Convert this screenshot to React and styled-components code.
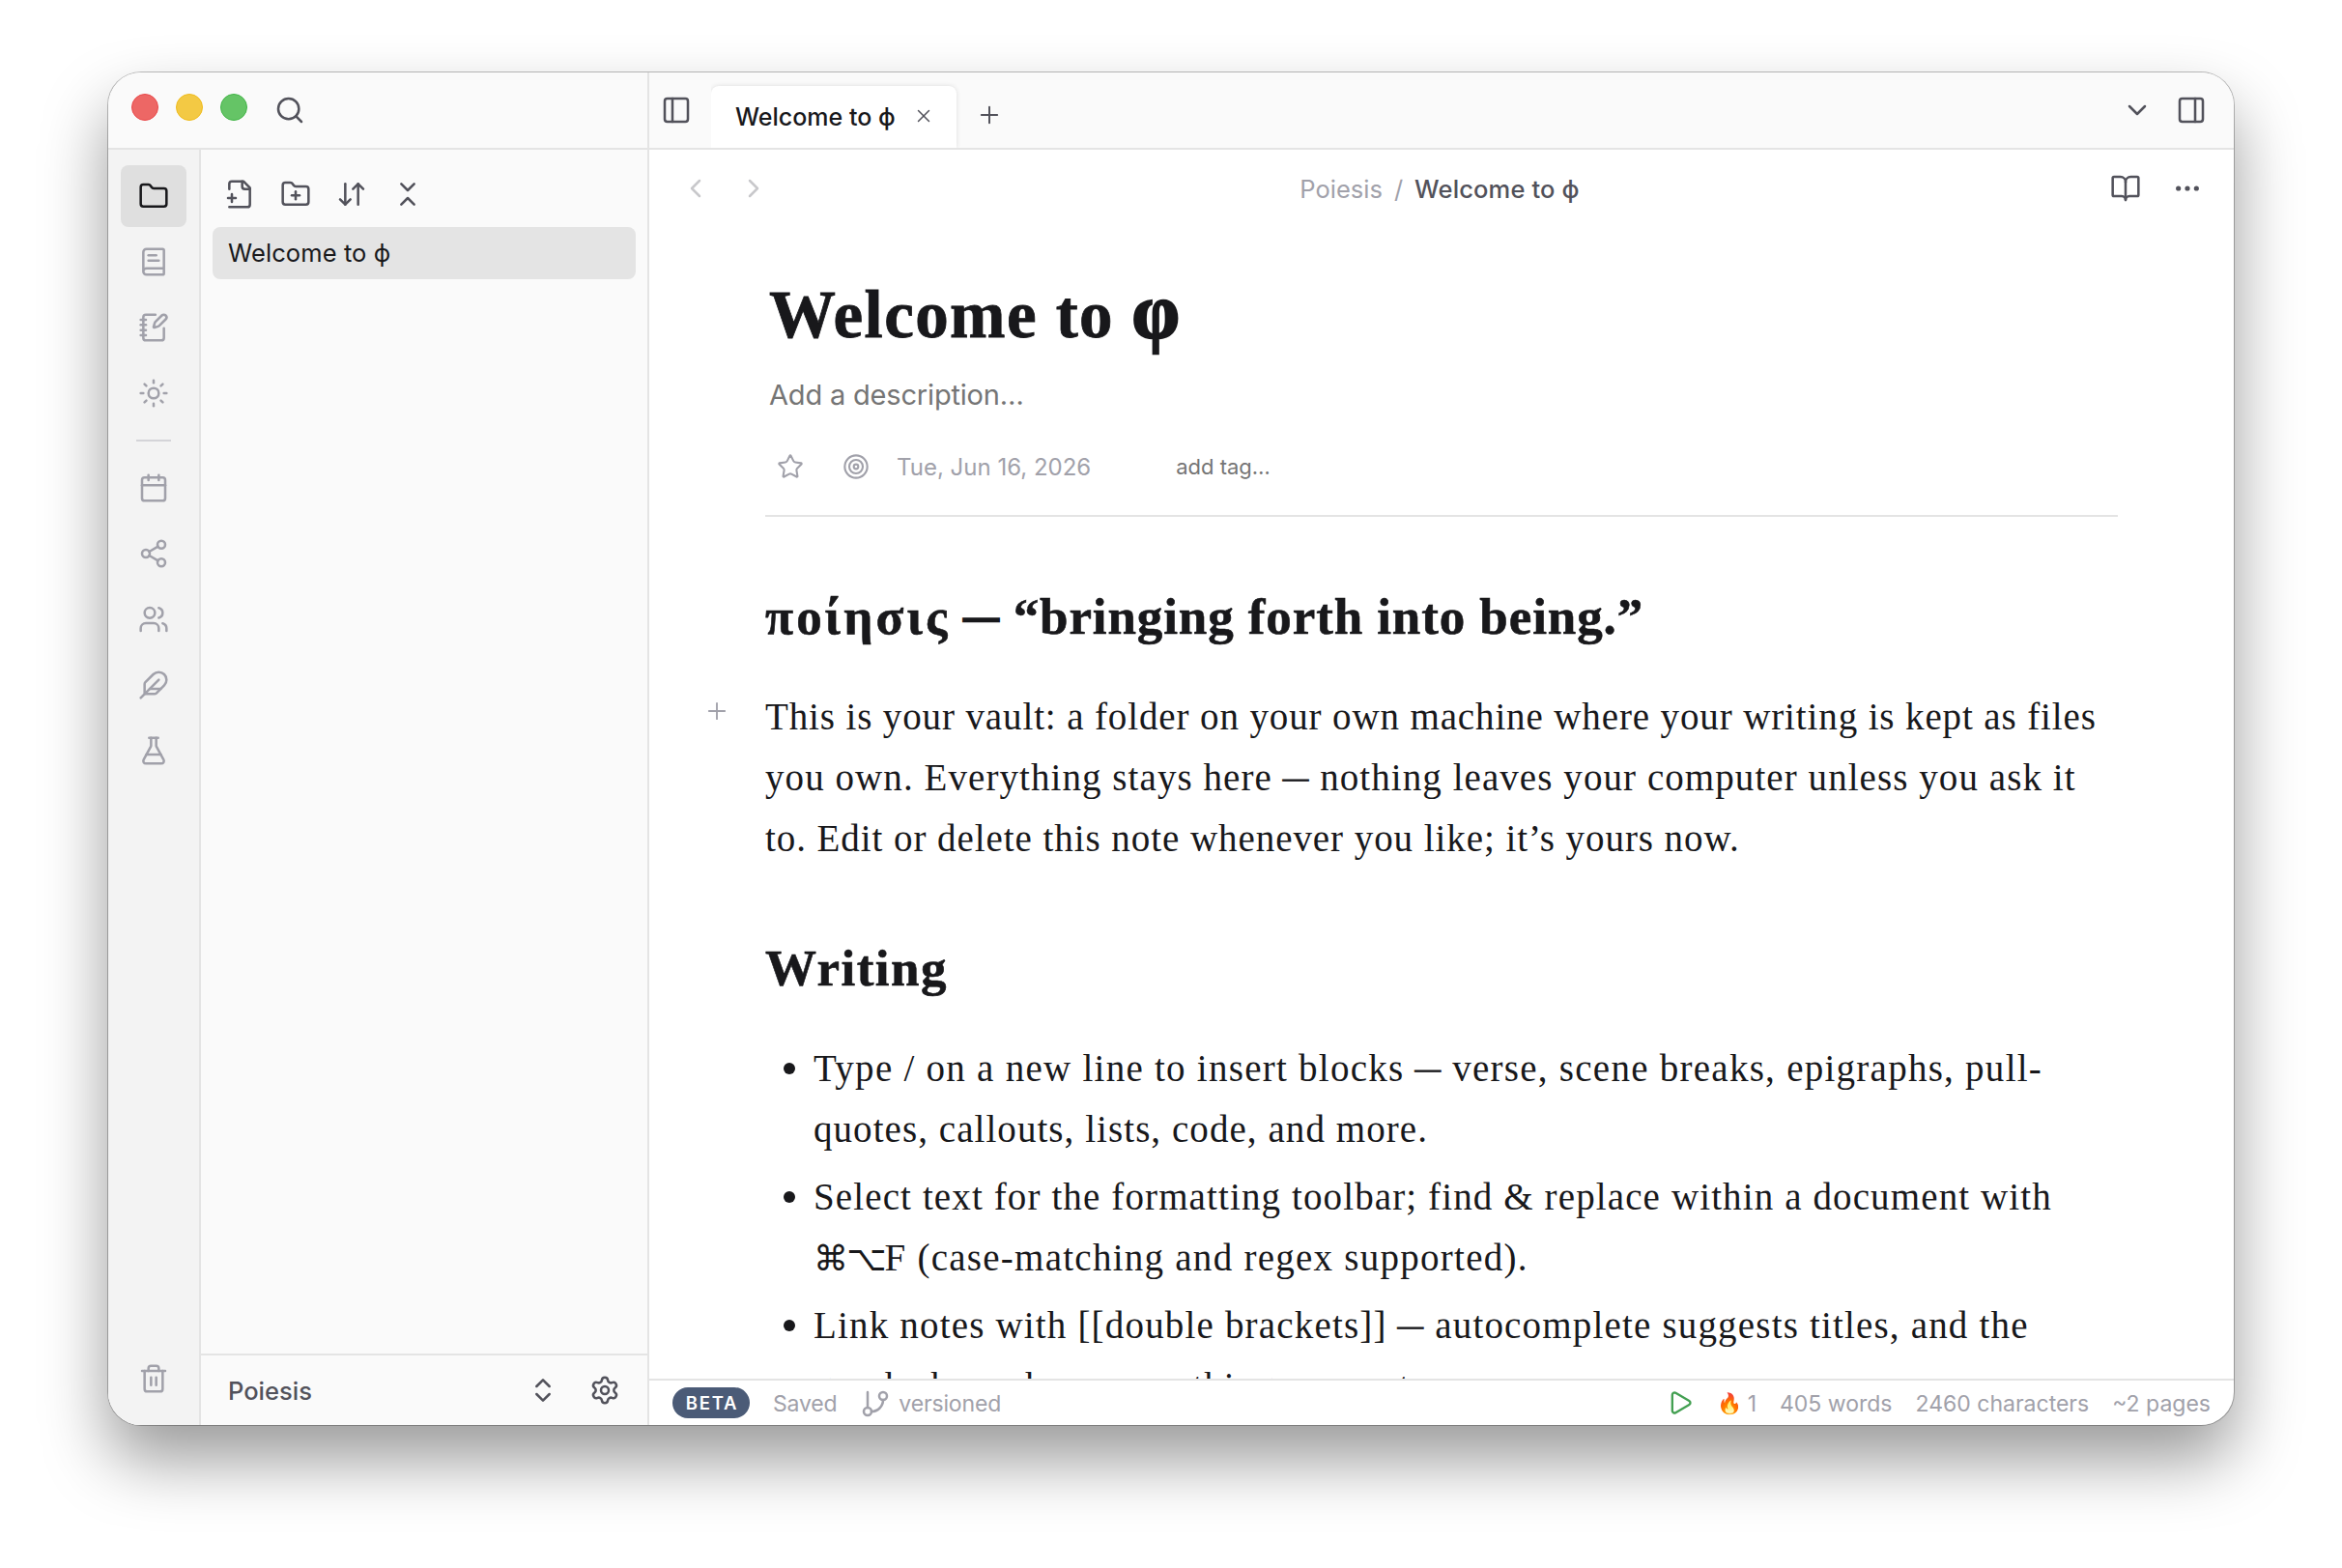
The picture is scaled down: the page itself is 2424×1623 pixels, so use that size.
import React from 'react';
import styled, { createGlobalStyle } from 'styled-components';
import {
    ArrowDownUp, BookOpen, Calendar, ChevronDown, ChevronLeft, ChevronRight, ChevronsDownUp,
    ChevronsUpDown, Ellipsis, Feather, FlaskConical, Folder, FolderPlus, GitBranch, NotebookPen,
    PanelLeft, PanelRight, Play, Plus, Search, Settings, Share2, Star, Sun, Target, Trash2, Users, X,
} from 'lucide-react';

const colors = {
    ink: '#18181b',
    icon: '#52525b',
    muted: '#a1a1aa',
    hint: '#757575',
    disabled: '#c8c8cb',
    line: '#e4e4e4',
    rail: '#f3f3f3',
    panel: '#fafafa',
    page: '#ffffff',
    badge: '#4b5b77',
    play: '#43a052',
};

const ui = `Inter, 'Liberation Sans', sans-serif`;
const serif = `'Liberation Serif', 'DejaVu Sans', serif`;

const GlobalStyle = createGlobalStyle`
    * {
        box-sizing: border-box;
    }
    body {
        margin: 0;
        background: #ffffff;
        overflow: hidden;
    }
`;

const Desktop = styled.div`
    height: 1623px;
    padding: 75px 112px 148px;
    font-family: ${ui};
    color: ${colors.ink};
`;

const Window = styled.div`
    height: 1400px;
    display: grid;
    grid-template-columns: 560px 1fr;
    border-radius: 34px;
    overflow: hidden;
    background: ${colors.page};
    box-shadow: 0 0 0 1px rgba(0, 0, 0, 0.25), 0 36px 68px rgba(0, 0, 0, 0.4);
`;

const Sidebar = styled.aside`
    display: flex;
    flex-direction: column;
    min-height: 0;
    background: ${colors.panel};
    border-right: 2px solid ${colors.line};
`;

const TitleBar = styled.div`
    flex: none;
    display: flex;
    align-items: center;
    height: 80px;
    padding-left: 24px;
    border-bottom: 2px solid ${colors.line};
`;

const Lights = styled.div`
    display: flex;
    gap: 18px;
    margin: 0 28px 6px 0;
`;

const Light = styled.span`
    width: 28px;
    height: 28px;
    border-radius: 50%;
    background: ${(p) => p.$fill};
    border: 1px solid ${(p) => p.$edge};
`;

const SidebarBody = styled.div`
    flex: 1;
    display: flex;
    min-height: 0;
`;

const Rail = styled.nav`
    display: flex;
    flex-direction: column;
    align-items: center;
    gap: 4px;
    width: 96px;
    padding: 16px 0;
    background: ${colors.rail};
    border-right: 2px solid ${colors.line};
`;

const RailButton = styled.button`
    display: flex;
    align-items: center;
    justify-content: center;
    width: 68px;
    height: 64px;
    padding: 0;
    border: none;
    border-radius: 8px;
    background: ${(p) => (p.$active ? '#dfdfdf' : 'transparent')};
    color: ${(p) => (p.$active ? colors.ink : colors.muted)};
`;

const RailDivider = styled.div`
    width: 36px;
    height: 2px;
    margin: 12px 0;
    background: #d4d4d8;
`;

const Spacer = styled.div`
    flex: 1;
`;

const Files = styled.div`
    flex: 1;
    display: flex;
    flex-direction: column;
`;

const FileTools = styled.div`
    display: flex;
    gap: 10px;
    height: 80px;
    padding: 12px 16px 0;
`;

const IconButton = styled.button`
    flex: none;
    display: flex;
    align-items: center;
    justify-content: center;
    width: ${(p) => p.$width || 48}px;
    height: ${(p) => p.$height || 68}px;
    padding: 0;
    border: none;
    background: none;
    color: ${(p) => p.$color || colors.icon};
`;

const FileItem = styled.div`
    display: flex;
    align-items: center;
    height: 54px;
    margin: 0 12px;
    padding: 0 0 2px 16px;
    border-radius: 8px;
    background: ${colors.line};
    font-size: 25.5px;
    letter-spacing: 0.1px;
`;

const VaultBar = styled.div`
    display: flex;
    align-items: center;
    height: 74px;
    padding: 0 20px 0 28px;
    border-top: 2px solid ${colors.line};
`;

const VaultName = styled.span`
    flex: 1;
    font-size: 25.5px;
    font-weight: 500;
    color: ${colors.icon};
`;

const VaultActions = styled.div`
    display: flex;
    gap: 16px;
`;

const Main = styled.main`
    display: flex;
    flex-direction: column;
    min-width: 0;
    min-height: 0;
`;

const TabBar = styled.div`
    flex: none;
    display: flex;
    align-items: center;
    height: 80px;
    padding-right: 16px;
    background: ${colors.panel};
    border-bottom: 2px solid ${colors.line};
`;

const Tab = styled.div`
    align-self: flex-end;
    display: flex;
    align-items: center;
    justify-content: space-between;
    width: 254px;
    height: 64px;
    margin-left: 8px;
    padding: 0 23px 2px 25px;
    border-radius: 8px 8px 0 0;
    background: ${colors.page};
    box-shadow: 0 0 5px rgba(0, 0, 0, 0.12);
    clip-path: inset(-8px -8px 0 0);
    font-size: 25px;
    font-weight: 500;
    white-space: nowrap;
`;

const TabLabel = styled.span`
    padding-top: 2px;
`;

const NewTab = styled(IconButton)`
    margin: 10px 0 0 6px;
`;

const NoteBar = styled.div`
    flex: none;
    display: grid;
    grid-template-columns: 1fr auto 1fr;
    align-items: center;
    height: 80px;
    padding: 0 24px;
`;

const NavButtons = styled.div`
    display: flex;
    gap: 12px;
`;

const NoteActions = styled.div`
    display: flex;
    justify-content: flex-end;
    gap: 16px;
`;

const Breadcrumb = styled.div`
    display: flex;
    gap: 12px;
    padding: 1px 4px 0 0;
    font-size: 25.5px;
    color: ${colors.muted};
`;

const Current = styled.span`
    font-weight: 500;
    letter-spacing: 0.14px;
    color: ${colors.icon};
`;

const Note = styled.article`
    flex: 1;
    min-height: 0;
    overflow: hidden;
    padding: 51px 120px 0;
    font-family: ${serif};
`;

const NoteHeader = styled.header`
    padding-bottom: 22px;
    border-bottom: 2px solid ${colors.line};
`;

const Title = styled.h1`
    margin: 0 0 0 4px;
    font-size: 69px;
    line-height: 80px;
    letter-spacing: 1.4px;
    -webkit-text-stroke: 0.8px ${colors.ink};
`;

const Phi = styled.span`
    font-size: 1.15em;
    line-height: 0;
    -webkit-text-stroke: 2.4px ${colors.ink};
`;

const Description = styled.div`
    margin: 21px 0 0 4px;
    font-family: ${ui};
    font-size: 29px;
    line-height: 44px;
    letter-spacing: -0.18px;
    color: ${colors.hint};
`;

const Meta = styled.div`
    display: flex;
    align-items: center;
    height: 56px;
    margin-top: 24px;
    padding-left: 2px;
    gap: 20px;
    font-family: ${ui};
    color: ${colors.muted};
`;

const NoteDate = styled.span`
    margin: 0 68px 0 -2px;
    font-size: 24px;
`;

const AddTag = styled.span`
    font-size: 22px;
    color: ${colors.hint};
`;

const Heading = styled.h2`
    margin: ${(p) => p.$top}px 0 39px;
    font-size: 53px;
    line-height: 66px;
    letter-spacing: ${(p) => p.$track}px;
    -webkit-text-stroke: 0.6px ${colors.ink};
    white-space: nowrap;
`;

const Greek = styled.span`
    letter-spacing: 3.1px;
`;

const Paragraph = styled.p`
    position: relative;
    margin: 0;
`;

const Line = styled.span`
    display: block;
    font-size: 39px;
    line-height: 63px;
    letter-spacing: ${(p) => p.$track}px;
    white-space: nowrap;
`;

const Dash = styled.span`
    font-size: 0.68em;
    line-height: 0;
    vertical-align: 0.16em;
    -webkit-text-stroke: ${(p) => p.$weight || 1}px ${colors.ink};
`;

const Keys = styled.span`
    font-size: 36px;
    line-height: 0;
    letter-spacing: -2px;
`;

const AddBlock = styled(Plus)`
    position: absolute;
    left: -64px;
    top: 12px;
    color: ${colors.muted};
`;

const List = styled.ul`
    display: flex;
    flex-direction: column;
    gap: 7px;
    margin: 39px 0 0;
    padding: 0;
    list-style: none;
`;

const Item = styled.li`
    display: flex;
    padding-left: 19px;

    &::before {
        content: '';
        flex: none;
        width: 12px;
        height: 12px;
        margin: 26px 19px 0 0;
        border-radius: 50%;
        background: ${colors.ink};
    }
`;

const StatusBar = styled.footer`
    flex: none;
    display: flex;
    align-items: center;
    gap: 24px;
    height: 48px;
    padding: 0 24px;
    border-top: 2px solid ${colors.line};
    font-size: 23px;
    color: ${colors.muted};
`;

const Badge = styled.span`
    display: flex;
    align-items: center;
    justify-content: center;
    width: 80px;
    height: 32px;
    padding-left: 2px;
    border-radius: 16px;
    background: ${colors.badge};
    color: #ffffff;
    font-size: 18.5px;
    font-weight: 600;
    letter-spacing: 1.8px;
`;

const Status = styled.span`
    display: flex;
    align-items: center;
    gap: ${(p) => p.$gap || 0}px;
    padding-top: 1px;
    letter-spacing: ${(p) => p.$track || 0}px;
    white-space: nowrap;
`;

const Flame = styled.span`
    width: 28px;
    font-size: 21px;
    line-height: 1;
`;

// file icon with the plus on its left edge, not in the lucide set any more
function FilePlusIcon() {
    return (
        <svg width="32" height="32" viewBox="0 0 24 24" fill="none" stroke="currentColor"
             strokeWidth="1.9" strokeLinecap="round" strokeLinejoin="round">
            <path d="M4 22h14a2 2 0 0 0 2-2V7l-5-5H6a2 2 0 0 0-2 2v4"/>
            <path d="M14 2v4a2 2 0 0 0 2 2h4"/>
            <path d="M3 15h6"/>
            <path d="M6 12v6"/>
        </svg>
    );
}

// book with a spine at the bottom and two lines of text
function BookTextIcon() {
    return (
        <svg width="32" height="32" viewBox="0 0 24 24" fill="none" stroke="currentColor"
             strokeWidth="1.9" strokeLinecap="round" strokeLinejoin="round">
            <path d="M4 19.5v-15A2.5 2.5 0 0 1 6.5 2H19a1 1 0 0 1 1 1v18a1 1 0 0 1-1 1H6.5a1 1 0 0 1 0-5H20"/>
            <path d="M8 11h8"/>
            <path d="M8 7h6"/>
        </svg>
    );
}

const icon = { size: 32, strokeWidth: 1.9 };

const views = [Folder, BookTextIcon, NotebookPen, Sun];
const tools = [Calendar, Share2, Users, Feather, FlaskConical];

function App() {
    return (
        <Desktop>
            <GlobalStyle/>
            <Window>
                <Sidebar>
                    <TitleBar>
                        <Lights>
                            <Light $fill="#ed6765" $edge="#e9494a"/>
                            <Light $fill="#f3c944" $edge="#efbb1c"/>
                            <Light $fill="#65c466" $edge="#43b548"/>
                        </Lights>
                        <Search {...icon} color={colors.icon}/>
                    </TitleBar>
                    <SidebarBody>
                        <Rail>
                            {views.map((Icon, i) => (
                                <RailButton key={i} $active={i === 0}><Icon {...icon}/></RailButton>
                            ))}
                            <RailDivider/>
                            {tools.map((Icon, i) => (
                                <RailButton key={i}><Icon {...icon}/></RailButton>
                            ))}
                            <Spacer/>
                            <RailButton><Trash2 {...icon}/></RailButton>
                        </Rail>
                        <Files>
                            <FileTools>
                                <IconButton><FilePlusIcon/></IconButton>
                                <IconButton><FolderPlus {...icon}/></IconButton>
                                <IconButton><ArrowDownUp {...icon}/></IconButton>
                                <IconButton><ChevronsDownUp {...icon}/></IconButton>
                            </FileTools>
                            <FileItem>Welcome to ϕ</FileItem>
                            <Spacer/>
                            <VaultBar>
                                <VaultName>Poiesis</VaultName>
                                <VaultActions>
                                    <IconButton><ChevronsUpDown {...icon}/></IconButton>
                                    <IconButton><Settings {...icon}/></IconButton>
                                </VaultActions>
                            </VaultBar>
                        </Files>
                    </SidebarBody>
                </Sidebar>

                <Main>
                    <TabBar>
                        <IconButton $width={56}><PanelLeft {...icon}/></IconButton>
                        <Tab>
                            <TabLabel>Welcome to ϕ</TabLabel>
                            <X size={22} strokeWidth={1.6} color={colors.icon}/>
                        </Tab>
                        <NewTab $width={56}><Plus size={28} strokeWidth={1.7}/></NewTab>
                        <Spacer/>
                        <IconButton $width={56}><ChevronDown {...icon}/></IconButton>
                        <IconButton $width={56}><PanelRight {...icon}/></IconButton>
                    </TabBar>
                    <NoteBar>
                        <NavButtons>
                            <IconButton $color={colors.disabled}><ChevronLeft {...icon}/></IconButton>
                            <IconButton $color={colors.disabled}><ChevronRight {...icon}/></IconButton>
                        </NavButtons>
                        <Breadcrumb>
                            <span>Poiesis</span>
                            <span>/</span>
                            <Current>Welcome to ϕ</Current>
                        </Breadcrumb>
                        <NoteActions>
                            <IconButton><BookOpen {...icon}/></IconButton>
                            <IconButton><Ellipsis {...icon}/></IconButton>
                        </NoteActions>
                    </NoteBar>

                    <Note>
                        <NoteHeader>
                            <Title>Welcome to <Phi>φ</Phi></Title>
                            <Description>Add a description…</Description>
                            <Meta>
                                <IconButton $height={48} $color={colors.muted}>
                                    <Star size={28} strokeWidth={1.8}/>
                                </IconButton>
                                <IconButton $height={48} $color={colors.muted}>
                                    <Target size={28} strokeWidth={1.8}/>
                                </IconButton>
                                <NoteDate>Tue, Jun 16, 2026</NoteDate>
                                <AddTag>add tag…</AddTag>
                            </Meta>
                        </NoteHeader>

                        <Heading $top={70} $track={0.9}>
                            <Greek>ποίησις</Greek> <Dash $weight={2.4}>—</Dash> “bringing forth into being.”
                        </Heading>
                        <Paragraph>
                            <AddBlock size={28} strokeWidth={1.6}/>
                            <Line $track={0.877}>This is your vault: a folder on your own machine where your writing is kept as files</Line>
                            <Line $track={1.07}>you own. Everything stays here <Dash>—</Dash> nothing leaves your computer unless you ask it</Line>
                            <Line $track={0.94}>to. Edit or delete this note whenever you like; it’s yours now.</Line>
                        </Paragraph>

                        <Heading $top={70} $track={1.48}>Writing</Heading>
                        <List>
                            <Item>
                                <div>
                                    <Line $track={1.26}>Type / on a new line to insert blocks <Dash>—</Dash> verse, scene breaks, epigraphs, pull-</Line>
                                    <Line $track={1.06}>quotes, callouts, lists, code, and more.</Line>
                                </div>
                            </Item>
                            <Item>
                                <div>
                                    <Line $track={1.12}>Select text for the formatting toolbar; find &amp; replace within a document with</Line>
                                    <Line $track={1.26}><Keys>⌘⌥</Keys>F (case-matching and regex supported).</Line>
                                </div>
                            </Item>
                            <Item>
                                <div>
                                    <Line $track={1.18}>Link notes with [[double brackets]] <Dash>—</Dash> autocomplete suggests titles, and the</Line>
                                    <Line $track={1.09}>graph shows how everything connects.</Line>
                                </div>
                            </Item>
                        </List>
                    </Note>

                    <StatusBar>
                        <Badge>BETA</Badge>
                        <Status $track={-0.2}>Saved</Status>
                        <Status $gap={8} $track={-0.14}><GitBranch {...icon}/>versioned</Status>
                        <Spacer/>
                        <Play size={28} strokeWidth={2} color={colors.play}/>
                        <Status $gap={4}><Flame>🔥</Flame>1</Status>
                        <Status>405 words</Status>
                        <Status>2460 characters</Status>
                        <Status>~2 pages</Status>
                    </StatusBar>
                </Main>
            </Window>
        </Desktop>
    );
}

export default App;
